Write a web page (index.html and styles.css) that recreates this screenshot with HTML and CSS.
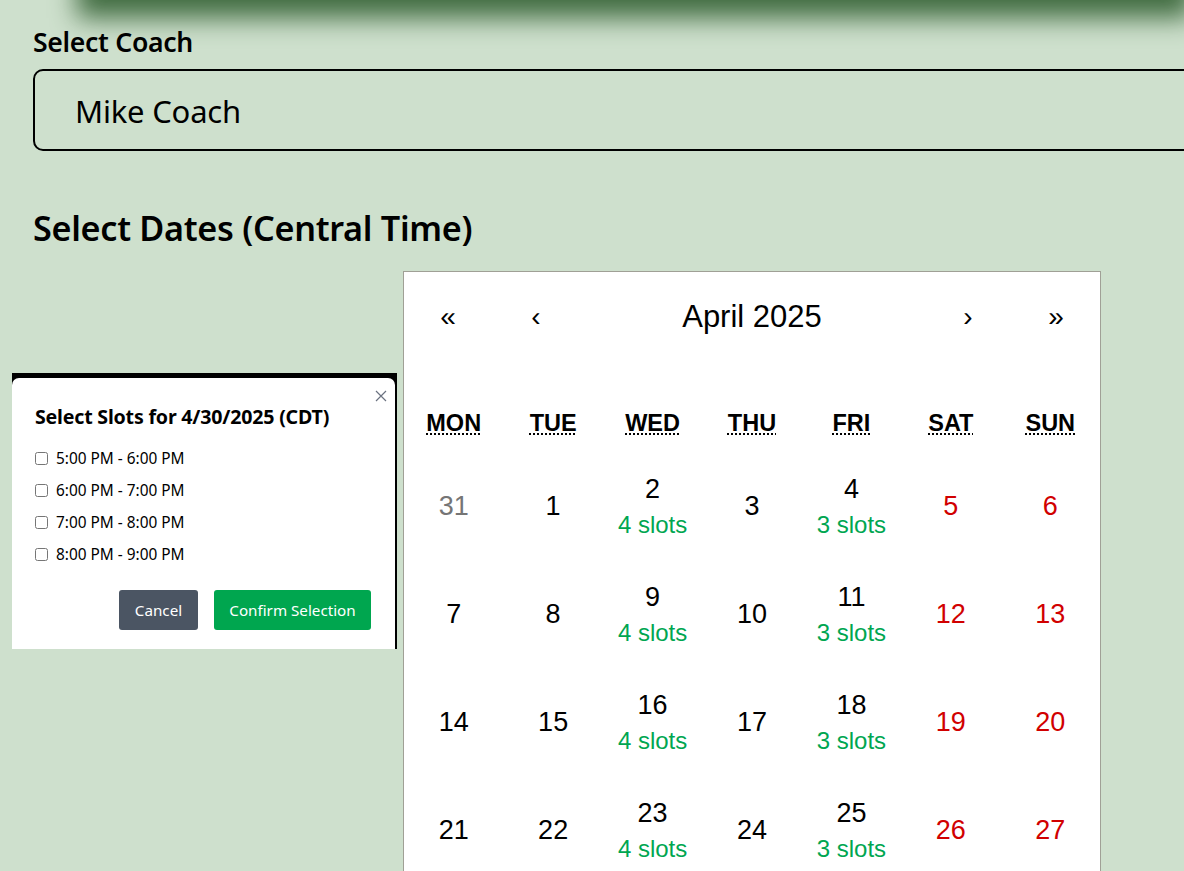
FILE: index.html
```html
<!DOCTYPE html>
<html lang="en">
<head>
<meta charset="utf-8">
<title>Select Coach</title>
<link rel="stylesheet" href="styles.css">
</head>
<body>
<div class="topbar"></div>
<main class="page">
  <label class="field-label" for="coach">Select Coach</label>
  <div class="select" id="coach">Mike Coach</div>
  <h2 class="section-title">Select Dates (Central Time)</h2>
  <div class="calendar">
    <div class="cal-nav">
      <button class="nav-btn">«</button>
      <button class="nav-btn">‹</button>
      <span class="nav-label">April 2025</span>
      <button class="nav-btn">›</button>
      <button class="nav-btn">»</button>
    </div>
    <div class="weekdays">
      <div class="wd"><abbr title="Monday">MON</abbr></div>
      <div class="wd"><abbr title="Tuesday">TUE</abbr></div>
      <div class="wd"><abbr title="Wednesday">WED</abbr></div>
      <div class="wd"><abbr title="Thursday">THU</abbr></div>
      <div class="wd"><abbr title="Friday">FRI</abbr></div>
      <div class="wd"><abbr title="Saturday">SAT</abbr></div>
      <div class="wd"><abbr title="Sunday">SUN</abbr></div>
    </div>
    <div class="days">
      <div class="tile"><span class="num muted">31</span></div>
      <div class="tile"><span class="num">1</span></div>
      <div class="tile"><span class="num">2</span><span class="slots">4 slots</span></div>
      <div class="tile"><span class="num">3</span></div>
      <div class="tile"><span class="num">4</span><span class="slots">3 slots</span></div>
      <div class="tile"><span class="num weekend">5</span></div>
      <div class="tile"><span class="num weekend">6</span></div>

      <div class="tile"><span class="num">7</span></div>
      <div class="tile"><span class="num">8</span></div>
      <div class="tile"><span class="num">9</span><span class="slots">4 slots</span></div>
      <div class="tile"><span class="num">10</span></div>
      <div class="tile"><span class="num">11</span><span class="slots">3 slots</span></div>
      <div class="tile"><span class="num weekend">12</span></div>
      <div class="tile"><span class="num weekend">13</span></div>

      <div class="tile"><span class="num">14</span></div>
      <div class="tile"><span class="num">15</span></div>
      <div class="tile"><span class="num">16</span><span class="slots">4 slots</span></div>
      <div class="tile"><span class="num">17</span></div>
      <div class="tile"><span class="num">18</span><span class="slots">3 slots</span></div>
      <div class="tile"><span class="num weekend">19</span></div>
      <div class="tile"><span class="num weekend">20</span></div>

      <div class="tile"><span class="num">21</span></div>
      <div class="tile"><span class="num">22</span></div>
      <div class="tile"><span class="num">23</span><span class="slots">4 slots</span></div>
      <div class="tile"><span class="num">24</span></div>
      <div class="tile"><span class="num">25</span><span class="slots">3 slots</span></div>
      <div class="tile"><span class="num weekend">26</span></div>
      <div class="tile"><span class="num weekend">27</span></div>
    </div>
  </div>
</main>

<div class="modal-backdrop">
  <div class="modal">
    <button class="close" aria-label="Close">
      <svg width="12" height="12" viewBox="0 0 12 12"><path d="M1 1L11 11M11 1L1 11" stroke="#6b7280" stroke-width="1.2" fill="none"/></svg>
    </button>
    <h3 class="modal-title">Select Slots for 4/30/2025 (CDT)</h3>
    <ul class="slot-list">
      <li><label><input type="checkbox"> 5:00 PM - 6:00 PM</label></li>
      <li><label><input type="checkbox"> 6:00 PM - 7:00 PM</label></li>
      <li><label><input type="checkbox"> 7:00 PM - 8:00 PM</label></li>
      <li><label><input type="checkbox"> 8:00 PM - 9:00 PM</label></li>
    </ul>
    <div class="modal-actions">
      <button class="btn btn-cancel">Cancel</button>
      <button class="btn btn-confirm">Confirm Selection</button>
    </div>
  </div>
</div>
</body>
</html>
```

FILE: styles.css
```css
html, body {
  margin: 0;
  padding: 0;
  overflow: hidden;
}
body {
  background: #cee0cd;
  font-family: "Noto Sans", "Open Sans", sans-serif;
  color: #000;
  height: 871px;
  position: relative;
}
.topbar {
  height: 60px;
  margin: -60px 0 0 85px;
  background: #3d6b3d;
  box-shadow: 0 10px 26px 8px rgba(58, 102, 58, 0.95);
}
.page {
  width: 1438px;
  padding: 25px 0 0 33px;
  display: flex;
  flex-direction: column;
}
.field-label {
  font-size: 26.6px;
  font-weight: 600;
  line-height: 34px;
  letter-spacing: -0.3px;
}
.select {
  margin-top: 10px;
  height: 78px;
  border: 2px solid #000;
  border-radius: 10px;
  padding-left: 40px;
  font-size: 31px;
  line-height: 80px;
  letter-spacing: -0.2px;
}
.section-title {
  margin: 54px 0 0;
  font-size: 34.2px;
  font-weight: 600;
  line-height: 46px;
  letter-spacing: -0.3px;
}
.calendar {
  align-self: center;
  margin-top: 20px;
  width: 696px;
  background: #fff;
  border: 1px solid #a0a096;
  font-family: "Liberation Sans", Arial, sans-serif;
}
.cal-nav {
  display: flex;
  height: 90px;
  align-items: center;
}
.nav-btn {
  width: 88px;
  height: 90px;
  border: 0;
  background: none;
  font-family: "Liberation Sans", Arial, sans-serif;
  font-size: 28px;
  color: #000;
  padding: 0;
}
.nav-label {
  flex: 1;
  text-align: center;
  font-size: 31px;
}
.weekdays {
  display: grid;
  grid-template-columns: repeat(7, 1fr);
  padding: 47px 0 14px;
}
.wd {
  text-align: center;
  font-size: 23.5px;
  font-weight: 700;
  line-height: 28px;
}
.wd abbr {
  text-decoration: underline dotted;
  text-decoration-thickness: 2px;
  text-underline-offset: 2px;
}
.days {
  display: grid;
  grid-template-columns: repeat(7, 1fr);
}
.tile {
  height: 108px;
  display: flex;
  flex-direction: column;
  align-items: center;
  justify-content: center;
  padding-top: 2px;
  box-sizing: border-box;
}
.num {
  font-size: 27px;
  line-height: 32px;
}
.num.muted { color: #757575; }
.num.weekend { color: #d10000; }
.slots {
  margin-top: 6px;
  font-size: 24px;
  line-height: 28px;
  color: #00a651;
}

.modal-backdrop {
  position: absolute;
  left: 12px;
  top: 373px;
  width: 385px;
  height: 276px;
  background: #000;
}
.modal {
  position: relative;
  margin-top: 5px;
  width: 383px;
  height: 271px;
  background: #fff;
  border-radius: 7px 7px 0 0;
  box-sizing: border-box;
  padding: 26px 23px 0;
}
.close {
  position: absolute;
  right: 8px;
  top: 12px;
  border: 0;
  background: none;
  padding: 0;
  width: 12px;
  height: 12px;
  display: flex;
}
.modal-title {
  margin: 0;
  font-size: 19.6px;
  font-weight: 700;
  line-height: 26px;
  letter-spacing: -0.2px;
}
.slot-list {
  list-style: none;
  margin: 12px 0 0;
  padding: 0;
}
.slot-list li {
  height: 32px;
  display: flex;
  align-items: center;
}
.slot-list label {
  display: flex;
  align-items: center;
  font-size: 15.4px;
  gap: 8px;
}
.slot-list input {
  margin: 0;
  width: 13px;
  height: 13px;
}
.modal-actions {
  display: flex;
  justify-content: flex-end;
  gap: 16px;
  margin-top: 20px;
  padding-right: 1px;
}
.btn {
  height: 40px;
  border: 0;
  border-radius: 3px;
  color: #fff;
  font-family: "Noto Sans", "Open Sans", sans-serif;
  font-size: 15.2px;
  padding: 0;
}
.btn-cancel { background: #4b5563; width: 79px; }
.btn-confirm { background: #00a64f; width: 157px; }
```
